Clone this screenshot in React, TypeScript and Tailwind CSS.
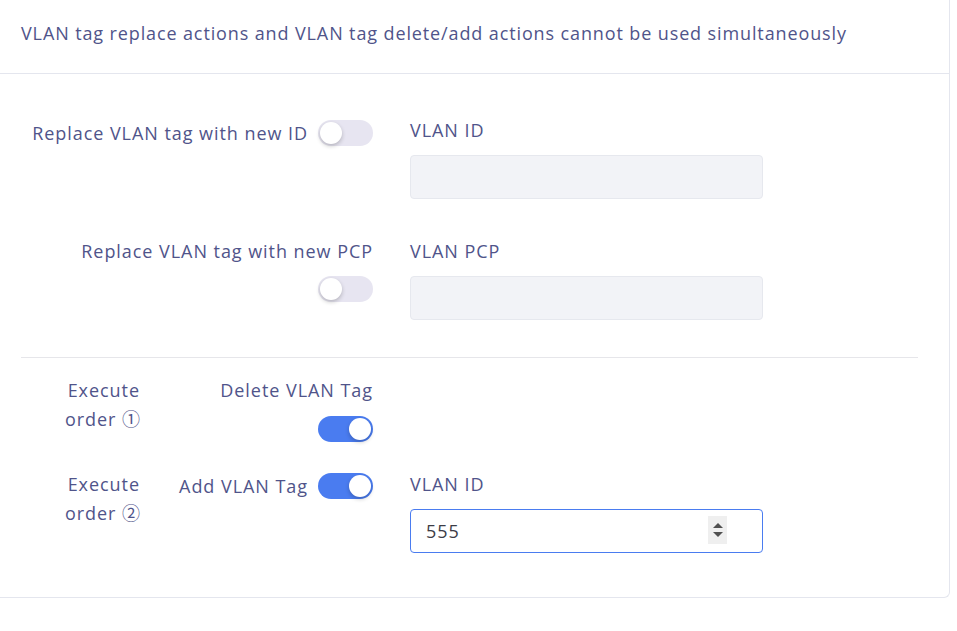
import { useState } from "react";

const textColor = "text-[#50548a]";

function Toggle({ on }: { on: boolean }) {
  return (
    <span
      className={`relative inline-flex h-[26px] w-[55px] shrink-0 items-center rounded-full ${
        on ? "bg-[#4a7cf0]" : "bg-[#e7e5f1]"
      }`}
    >
      <span
        className={`absolute top-[2px] h-[22px] w-[22px] rounded-full bg-white shadow-[0_2px_4px_rgba(0,0,0,0.22)] ${
          on ? "left-[31px]" : "left-[2px]"
        }`}
      />
    </span>
  );
}

function Circled({ children }: { children: string }) {
  return (
    <span className="tracking-normal" style={{ fontFamily: '"Noto Sans CJK SC", sans-serif' }}>
      {children}
    </span>
  );
}

function Field({ label, value, active }: { label: string; value?: string; active?: boolean }) {
  return (
    <div className="w-[353px] self-start">
      <div className="h-[28px] leading-[28px]">{label}</div>
      <div className="relative mt-[11px]">
        <div
          className={`h-[44px] rounded-[4px] border px-[15px] leading-[42px] ${
            active ? "border-[#4a7cf0] bg-white text-[#3c3c46]" : "border-[#e6e8ee] bg-[#f2f3f7]"
          }`}
        >
          {value}
        </div>
        {active ? (
          <span className="absolute right-[36px] top-[7px] flex h-[28px] w-[19px] flex-col items-center justify-center gap-[4px] bg-[#efefef]">
            <span className="h-0 w-0 border-x-[5px] border-b-[5px] border-x-transparent border-b-[#505050]" />
            <span className="h-0 w-0 border-x-[5px] border-t-[5px] border-x-transparent border-t-[#505050]" />
          </span>
        ) : null}
      </div>
    </div>
  );
}

export default function App() {
  const [rows] = useState({ replaceId: false, replacePcp: false, del: true, add: true });

  return (
    <div
      className={`h-[631px] w-[957px] bg-white text-[18px] tracking-[0.95px] ${textColor}`}
      style={{ fontFamily: '"Open Sans", "Noto Sans", sans-serif' }}
    >
      <div className="w-[950px] rounded-br-[6px] border-r border-b border-[#e4e6ee]">
        <div className="h-[74px] border-b border-[#e4e6ee] pl-[21px] pt-[21px] leading-6 tracking-[0.88px]">
          VLAN tag replace actions and VLAN tag delete/add actions cannot be used simultaneously
        </div>

        <div className="px-[21px] pb-[44px]">
          <div className="mt-[42px] flex items-start gap-[37px]">
            <div className="flex w-[352px] items-center justify-end gap-[10px] pt-[3px] leading-[28px]">
              <span>Replace VLAN tag with new ID</span>
              <Toggle on={rows.replaceId} />
            </div>
            <Field label="VLAN ID" />
          </div>

          <div className="mt-[38px] flex items-start gap-[37px]">
            <div className="flex w-[352px] flex-col items-end gap-[10px] leading-[28px]">
              <span>Replace VLAN tag with new PCP</span>
              <span className="flex h-[28px] items-center">
                <Toggle on={rows.replacePcp} />
              </span>
            </div>
            <Field label="VLAN PCP" />
          </div>

          <div className="mt-[37px] h-px w-[897px] bg-[#e6e6ea]" />

          <div className="mt-[18px] flex items-start leading-[28px]">
            <div className="w-[119px] text-right">
              <div>Execute</div>
              <div>
                order <Circled>①</Circled>
              </div>
            </div>
            <div className="flex w-[233px] flex-col items-end gap-[11px]">
              <span>Delete VLAN Tag</span>
              <span className="flex h-[28px] items-center">
                <Toggle on={rows.del} />
              </span>
            </div>
          </div>

          <div className="mt-[27px] flex items-start gap-[37px] leading-[28px]">
            <div className="flex w-[352px] items-start">
              <div className="w-[119px] text-right">
                <div>Execute</div>
                <div>
                  order <Circled>②</Circled>
                </div>
              </div>
              <div className="flex flex-1 items-center justify-end gap-[10px] pt-[2px]">
                <span>Add VLAN Tag</span>
                <Toggle on={rows.add} />
              </div>
            </div>
            <Field label="VLAN ID" value="555" active />
          </div>
        </div>
      </div>
    </div>
  );
}
